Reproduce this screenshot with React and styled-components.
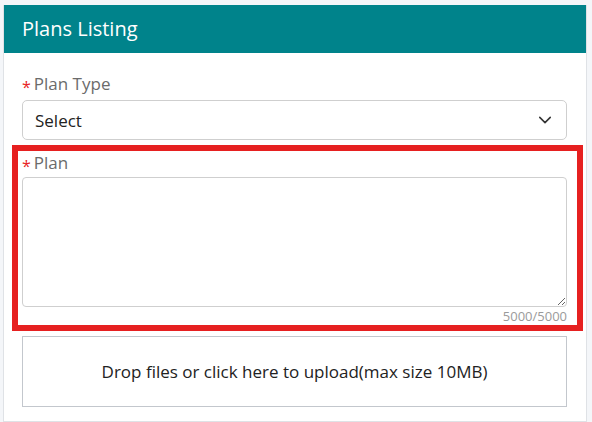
import React, { useState } from "react";
import styled, { createGlobalStyle } from "styled-components";

const GlobalStyle = createGlobalStyle`
  html, body {
    margin: 0;
    padding: 0;
    background: #f4f6f9;
    font-family: "Open Sans", "Liberation Sans", sans-serif;
  }
  * { box-sizing: border-box; }
`;

const Card = styled.div`
  margin: 5px 5px 0 3px;
  background: #ffffff;
  border: 1px solid #dfe2e6;
  border-top: none;
  min-height: 417px;
`;

const Header = styled.div`
  height: 48px;
  background: #00838b;
  color: #ffffff;
  font-size: 20px;
  line-height: 46px;
  padding-left: 18px;
  border-top: 1px solid #00838b;
`;

const Body = styled.div`
  padding: 19px 19px 0 18px;
`;

const Label = styled.label`
  display: flex;
  align-items: center;
  font-size: 17px;
  color: #6b6b6b;
  line-height: 22px;
  height: 24px;
  &::before {
    content: "*";
    color: #e82424;
    font-size: 16px;
    margin-right: 3px;
    margin-top: 5px;
  }
`;

const SelectBox = styled.div`
  margin-top: 4px;
  height: 40px;
  border: 1px solid #cfcfcf;
  border-radius: 5px;
  display: flex;
  align-items: center;
  justify-content: space-between;
  padding: 0 14px 0 12px;
  font-size: 17px;
  color: #222222;
  svg {
    width: 14px;
    height: 14px;
  }
`;

const Highlight = styled.div`
  margin: 5px -16px 0 -10px;
  border: 6px solid #e62020;
  padding: 0 10px 0 4px;
`;

const TextArea = styled.textarea`
  display: block;
  width: 100%;
  height: 130px;
  margin-top: 2px;
  border: 1px solid #cfcfcf;
  border-radius: 4px;
  resize: vertical;
  font-family: inherit;
  font-size: 16px;
  outline: none;
`;

const Counter = styled.div`
  text-align: right;
  font-size: 13px;
  color: #9a9a9a;
  line-height: 18px;
`;

const DropZone = styled.div`
  margin-top: 5px;
  height: 71px;
  border: 1px solid #c3c7cd;
  display: flex;
  align-items: center;
  justify-content: center;
  font-size: 17px;
  color: #222222;
  cursor: pointer;
`;

const Chevron = () => (
  <svg viewBox="0 0 16 16" fill="none" stroke="#333" strokeWidth="1.8" strokeLinecap="round" strokeLinejoin="round">
    <path d="M2 5l6 6 6-6" />
  </svg>
);

export default function App() {
  const [plan, setPlan] = useState("");
  return (
    <>
      <GlobalStyle />
      <Card>
        <Header>Plans Listing</Header>
        <Body>
          <Label>Plan Type</Label>
          <SelectBox>
            <span>Select</span>
            <Chevron />
          </SelectBox>
          <Highlight>
            <Label>Plan</Label>
            <TextArea value={plan} onChange={(e) => setPlan(e.target.value)} />
            <Counter>5000/5000</Counter>
          </Highlight>
          <DropZone>Drop files or click here to upload(max size 10MB)</DropZone>
        </Body>
      </Card>
    </>
  );
}
